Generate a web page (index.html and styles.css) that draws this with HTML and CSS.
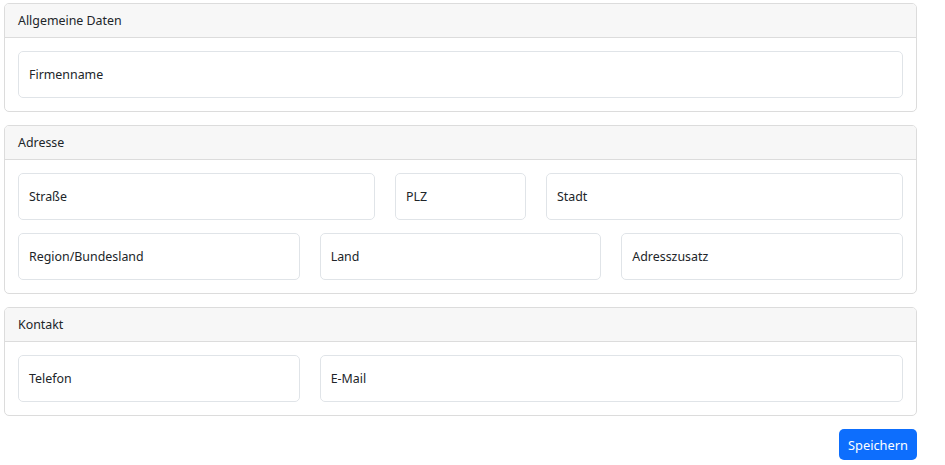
FILE: index.html
```html
<!DOCTYPE html>
<html lang="de">
<head>
<meta charset="utf-8">
<title>Formular</title>
<link rel="stylesheet" href="styles.css">
</head>
<body>
<main class="page">
  <section class="card">
    <header class="card-header">Allgemeine Daten</header>
    <div class="card-body">
      <div class="grid">
        <div class="field span-12"><span>Firmenname</span></div>
      </div>
    </div>
  </section>
  <section class="card">
    <header class="card-header">Adresse</header>
    <div class="card-body">
      <div class="grid">
        <div class="field span-5"><span>Straße</span></div>
        <div class="field span-2"><span>PLZ</span></div>
        <div class="field span-5"><span>Stadt</span></div>
        <div class="field span-4"><span>Region/Bundesland</span></div>
        <div class="field span-4"><span>Land</span></div>
        <div class="field span-4"><span>Adresszusatz</span></div>
      </div>
    </div>
  </section>
  <section class="card">
    <header class="card-header">Kontakt</header>
    <div class="card-body">
      <div class="grid">
        <div class="field span-4"><span>Telefon</span></div>
        <div class="field span-8"><span>E-Mail</span></div>
      </div>
    </div>
  </section>
  <div class="actions">
    <button class="btn-primary" type="button">Speichern</button>
  </div>
</main>
</body>
</html>
```
FILE: styles.css
```css
* { box-sizing: border-box; }
html, body { margin: 0; padding: 0; background: #fff; }
body {
  font-family: "Noto Sans", "Open Sans", "Liberation Sans", sans-serif;
  font-size: 12.4px;
  color: #212529;
}
.page {
  width: 913px;
  margin: 3px 0 0 4px;
  display: flex;
  flex-direction: column;
  gap: 13px;
}
.card {
  border: 1px solid #dcdcdc;
  border-radius: 5px;
  overflow: hidden;
}
.card-header {
  height: 34px;
  background: #f7f7f7;
  border-bottom: 1px solid #dcdcdc;
  padding: 0 13px;
  display: flex;
  align-items: center;
}
.card-body {
  padding: 13px;
}
.grid {
  display: grid;
  grid-template-columns: repeat(12, 1fr);
  column-gap: 20px;
  row-gap: 13px;
}
.field {
  height: 47px;
  border: 1px solid #e0e4e8;
  border-radius: 5px;
  padding: 0 10px;
  display: flex;
  align-items: center;
}
.span-12 { grid-column: span 12; }
.span-8 { grid-column: span 8; }
.span-5 { grid-column: span 5; }
.span-4 { grid-column: span 4; }
.span-2 { grid-column: span 2; }
.actions {
  display: flex;
  justify-content: flex-end;
}
.btn-primary {
  font: inherit;
  font-size: 12.8px;
  color: #fff;
  background: #0d6efd;
  border: 0;
  border-radius: 5px;
  width: 78px;
  height: 31px;
  padding: 0;
}
```
